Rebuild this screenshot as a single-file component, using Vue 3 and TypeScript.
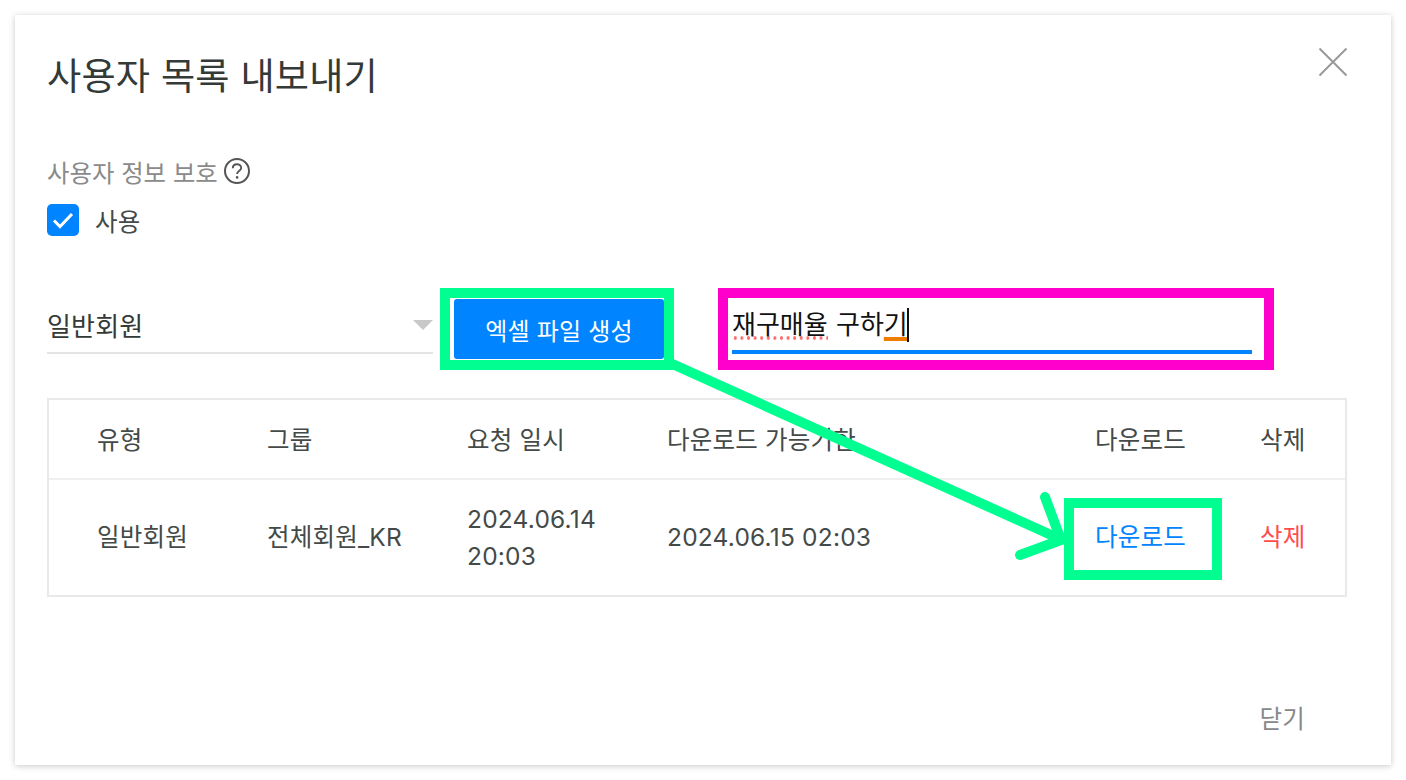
<script setup lang="ts">
const columns = ['유형', '그룹', '요청 일시', '다운로드 가능기한', '다운로드', '삭제']
</script>

<template>
  <div class="page">
    <div class="modal">
      <header class="modal-head">
        <h1 class="title">사용자 목록 내보내기</h1>
        <svg class="close" width="30" height="30" viewBox="0 0 30 30">
          <path d="M1.5 1.5 L28.5 28.5 M28.5 1.5 L1.5 28.5" stroke="#999" stroke-width="2" fill="none" />
        </svg>
      </header>

      <div class="label-row">
        <span>사용자 정보 보호</span>
        <svg width="26" height="26" viewBox="0 0 26 26">
          <circle cx="13" cy="13" r="12" stroke="#555" stroke-width="2" fill="none" />
          <path d="M8.8 10.2 C8.8 7.6 10.8 6.2 13 6.2 C15.3 6.2 17.2 7.7 17.2 9.9 C17.2 12.6 13.1 12.8 13.1 16" stroke="#555" stroke-width="1.9" fill="none" />
          <circle cx="13.1" cy="19.4" r="1.3" fill="#555" />
        </svg>
      </div>

      <div class="check-row">
        <span class="checkbox">
          <svg width="32" height="32" viewBox="0 0 32 32">
            <path d="M7 16.5 L13 22.5 L25 10" stroke="#fff" stroke-width="3" fill="none" />
          </svg>
        </span>
        <span>사용</span>
      </div>

      <div class="controls">
        <div class="select">
          <span>일반회원</span>
          <i class="caret"></i>
        </div>
        <button class="primary">엑셀 파일 생성</button>
        <div class="input">
          <span class="typed"><span class="spell">재구매율</span> 구하<span class="compose">기</span></span><i class="cursor"></i>
        </div>
      </div>

      <div class="table">
        <div class="row head-row">
          <div v-for="c in columns" :key="c" class="cell">{{ c }}</div>
        </div>
        <div class="row body-row">
          <div class="cell">일반회원</div>
          <div class="cell">전체회원_KR</div>
          <div class="cell">2024.06.14<br />20:03</div>
          <div class="cell">2024.06.15 02:03</div>
          <div class="cell link">다운로드</div>
          <div class="cell danger">삭제</div>
        </div>
      </div>

      <footer class="modal-foot">닫기</footer>

      <div class="mark green btn-mark"></div>
      <div class="mark magenta input-mark"></div>
      <div class="mark green link-mark"></div>
      <svg class="arrow" width="1376" height="750" viewBox="0 0 1376 750">
        <path d="M653 347 L1045 524" stroke="#00ff90" stroke-width="10" fill="none" />
        <path d="M1030 482 L1046 525 L1005 540" stroke="#00ff90" stroke-width="10" stroke-linecap="round" stroke-linejoin="miter" fill="none" />
      </svg>
    </div>
  </div>
</template>

<style scoped>
.page {
  padding: 15px;
  height: 780px;
  box-sizing: border-box;
  font-family: Inter, "Noto Sans CJK KR", sans-serif;
  font-size: 24.5px;
  letter-spacing: 0.2px;
  color: #444a48;
}

.modal {
  position: relative;
  width: 1376px;
  height: 750px;
  box-sizing: border-box;
  padding: 0 44px 0 32px;
  background: #fff;
  box-shadow: 0 1px 6px rgba(0, 0, 0, 0.22);
}

.modal-head {
  display: flex;
  justify-content: space-between;
  height: 134px;
}

.title {
  margin: 37px 0 0;
  font-size: 37.2px;
  line-height: 50px;
  font-weight: 400;
  color: #333a38;
}

.close {
  margin-top: 32px;
  margin-right: -1px;
}

.label-row {
  display: flex;
  align-items: center;
  gap: 6px;
  height: 44px;
  font-size: 24.4px;
  letter-spacing: 0;
  color: #8a8a8a;
}

.check-row {
  display: flex;
  align-items: center;
  gap: 16px;
  height: 32px;
  margin-top: 11px;
}

.checkbox {
  width: 32px;
  height: 32px;
  border-radius: 5px;
  background: #0084ff;
}

.controls {
  display: flex;
  margin-top: 62px;
  height: 63px;
}

.select {
  display: flex;
  align-items: center;
  justify-content: space-between;
  width: 386px;
  box-sizing: border-box;
  height: 56px;
  padding-right: 0;
  padding-bottom: 2px;
  border-bottom: 2px solid #e4e4e4;
  font-size: 26px;
  color: #333a38;
}

.caret {
  width: 0;
  height: 0;
  border-left: 10px solid transparent;
  border-right: 10px solid transparent;
  border-top: 10px solid #c8c8c8;
  margin-top: 2px;
}

.primary {
  width: 210px;
  height: 60px;
  margin-top: 1px;
  margin-left: 21px;
  padding: 0;
  border: none;
  border-radius: 3px;
  background: #0084ff;
  color: #fff;
  font: inherit;
  font-size: 24px;
  letter-spacing: inherit;
}

.input {
  display: flex;
  align-items: flex-start;
  width: 520px;
  height: 56px;
  box-sizing: border-box;
  margin-left: 68px;
  padding-top: 8px;
  border-bottom: 4px solid #0084ff;
  color: #111;
}

.typed {
  font-size: 26px;
  line-height: 38px;
  letter-spacing: 0;
  word-spacing: 1px;
  white-space: pre;
}

.spell {
  background: radial-gradient(circle, #ff6f6f 1.6px, transparent 1.9px) left bottom / 6.6px 4px repeat-x;
}

.compose {
  text-decoration: underline solid #f07c00 4px;
  text-underline-offset: 3px;
}

.cursor {
  width: 2px;
  height: 34px;
  margin: 2px 0 0 -1px;
  background: #111;
}

.table {
  margin-top: 37px;
  border: 2px solid #e9e9e9;
  box-sizing: border-box;
  width: 1300px;
}

.row {
  display: grid;
  grid-template-columns: 170px 200px 200px 428px 165px 1fr;
  align-items: center;
  padding-left: 48px;
}

.head-row {
  height: 76px;
  padding-bottom: 2px;
  border-bottom: 2px solid #efefef;
}

.body-row {
  height: 115px;
  line-height: 37px;
}

.link {
  color: #0084ff;
}

.danger {
  color: #ff4d4d;
}

.modal-foot {
  position: absolute;
  right: 86px;
  bottom: 28px;
  color: #888;
  line-height: 36px;
}

.mark {
  position: absolute;
  box-sizing: border-box;
  border: 10px solid;
}

.green {
  border-color: #00ff90;
}

.magenta {
  border-color: #ff00cc;
}

.btn-mark {
  left: 425px;
  top: 273px;
  width: 234px;
  height: 82px;
}

.input-mark {
  left: 703px;
  top: 273px;
  width: 556px;
  height: 82px;
}

.link-mark {
  left: 1049px;
  top: 483px;
  width: 158px;
  height: 82px;
}

.arrow {
  position: absolute;
  left: 0;
  top: 0;
  pointer-events: none;
}
</style>

<style>
body {
  background: #fff;
}
</style>
